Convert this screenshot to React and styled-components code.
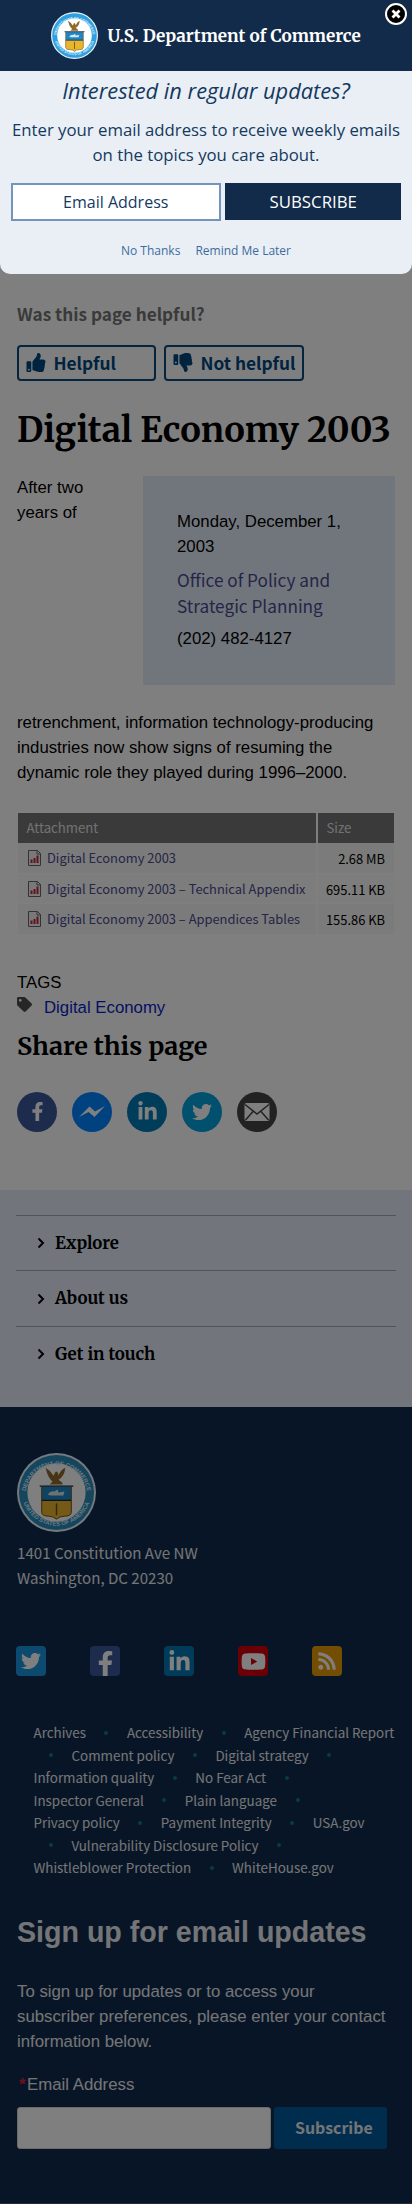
import React from "react";
import styled, { createGlobalStyle } from "styled-components";
import {
  FaThumbsUp,
  FaThumbsDown,
  FaTag,
  FaFacebookF,
  FaLinkedinIn,
  FaTwitter,
  FaYoutube,
  FaRss,
} from "react-icons/fa";

const sans = '"Liberation Sans", Arial, sans-serif';
const source = '"Source Sans Pro", "Noto Sans CJK JP", sans-serif';
const open = '"Open Sans", sans-serif';
const serif = '"Merriweather", "DejaVu Serif Condensed", "DejaVu Serif", serif';

const GlobalStyle = createGlobalStyle`
  * { box-sizing: border-box; }
  body { margin: 0; background: #fff; }
  h1, h2, h3, p, ul { margin: 0; padding: 0; }
  a { color: inherit; text-decoration: none; }
  svg { display: block; flex: none; }
`;

const Page = styled.div`
  position: relative;
  width: 412px;
  height: 2204px;
  overflow: hidden;
  font: 400 16.8px/25.2px ${sans};
  color: #000;
`;

const Dimmer = styled.div`
  position: absolute;
  inset: 0;
  background: rgba(0, 0, 0, 0.5);
`;

/* Subscription dialog */
const Dialog = styled.section`
  position: absolute;
  top: 0;
  left: 0;
  width: 412px;
  height: 274px;
  border-radius: 0 0 10px 10px;
  background: #e9eff4;
  color: #14395f;
  font-family: ${open};
  text-align: center;
`;

const DialogHeader = styled.header`
  display: flex;
  align-items: center;
  height: 71px;
  padding-left: 51px;
  gap: 9.5px;
  background: #122b4a;
  color: #fff;
`;

const Brand = styled.span`
  font: 700 17.1px/26px ${serif};
  white-space: nowrap;
`;

const CloseButton = styled.button`
  position: absolute;
  top: 3px;
  right: 5px;
  width: 22px;
  height: 22px;
  padding: 0;
  border: 2px solid #fff;
  border-radius: 50%;
  background: #000;
  display: grid;
  place-items: center;
`;

const DialogTitle = styled.h2`
  margin-top: 5px;
  font: italic 400 21.8px/30px ${open};
`;

const DialogText = styled.p`
  margin-top: 11.2px;
  font-size: 16.75px;
  line-height: 25.2px;
`;

const DialogForm = styled.div`
  display: flex;
  gap: 4px;
  margin: 15.4px 11px 0;
`;

const DialogField = styled.div`
  width: 211px;
  height: 38.5px;
  border: 2px solid #7395bd;
  background: #fff;
  font-size: 16px;
  line-height: 35px;
  padding-right: 1px;
`;

const DialogSubmit = styled.div`
  width: 176px;
  height: 37px;
  background: #122b4a;
  color: #fff;
  font-size: 16.8px;
  line-height: 37px;
`;

const DialogLinks = styled.div`
  display: flex;
  justify-content: center;
  gap: 15px;
  margin-top: 22px;
  font-size: 12px;
  line-height: 16px;
  color: #3c6c9e;
`;

/* Article */
const Main = styled.main`
  height: 1190px;
  padding: 300.7px 17px 0;
`;

const FeedbackTitle = styled.h3`
  font: 700 17.2px/25px ${source};
  color: #757575;
`;

const FeedbackRow = styled.div`
  display: flex;
  gap: 8px;
  margin-top: 19.3px;
`;

const FeedbackButton = styled.div`
  display: flex;
  align-items: center;
  gap: 8px;
  width: ${(p) => p.$width}px;
  height: 36px;
  padding-left: 6.5px;
  border: 2px solid #0b4a7f;
  border-radius: 4px;
  color: #00477f;
  font: 700 17.3px/32px ${source};
  white-space: nowrap;
  svg { width: 20px; height: 19px; flex: none; }
`;

const Title = styled.h1`
  margin-top: 27px;
  font: 700 34.4px/44px ${serif};
  white-space: nowrap;
`;

const Body = styled.p`
  margin-top: 22.6px;
`;

const Card = styled.span`
  float: right;
  display: flex;
  flex-direction: column;
  gap: 8.4px;
  width: 252px;
  height: 209px;
  margin: 1.4px 0 25px 30px;
  padding: 32.6px 34px 0;
  background: #e3ecf8;
`;

const OfficeLink = styled.a`
  font: 400 17.2px/25.2px ${source};
  color: #4c4a90;
`;

const Table = styled.div`
  display: grid;
  grid-template-columns: 298px 76px;
  column-gap: 2px;
  margin: 27.9px 0 0 1px;
  font: 400 12.9px/31.8px ${source};
`;

const HeadCell = styled.div`
  height: 29.5px;
  padding-left: 8.5px;
  background: #747474;
  color: #e4e4e4;
  line-height: 29.5px;
  font-size: 13.2px;
`;

const FileCell = styled.div`
  display: flex;
  align-items: center;
  gap: 6px;
  height: 30.7px;
  padding-left: 10px;
  border-bottom: 1px solid #fff;
  background: ${(p) => (p.$alt ? "#fafafa" : "#f7f7f7")};
  color: #4c4a90;
  white-space: nowrap;
`;

const SizeCell = styled.div`
  height: 30.7px;
  padding-right: 9px;
  border-bottom: 1px solid #fff;
  background: ${(p) => (p.$alt ? "#fafafa" : "#f7f7f7")};
  text-align: right;
  white-space: nowrap;
`;

const Tags = styled.div`
  margin-top: 34.6px;
`;

const TagLine = styled.div`
  display: flex;
  color: #0b1ec4;
  gap: 12px;
  svg { width: 15px; height: 15px; margin-top: 2px; color: #4d4d4d; }
`;

const ShareTitle = styled.h2`
  margin-top: 10px;
  font: 700 25.2px/32px ${serif};
`;

const ShareRow = styled.div`
  display: flex;
  gap: 15px;
  margin-top: 29.5px;
`;

const ShareButton = styled.a`
  display: grid;
  place-items: center;
  width: 40px;
  height: 40px;
  border-radius: 50%;
  background: ${(p) => p.$color};
  color: #fff;
`;

/* Secondary navigation */
const NavSection = styled.nav`
  height: 217px;
  padding: 24.5px 16px 0;
  background: #e5edf9;
`;

const NavItem = styled.a`
  display: flex;
  align-items: center;
  gap: 10.5px;
  height: 55.6px;
  padding: 1px 0 0 20.5px;
  border-top: 1px solid #a2a8b2;
  font: 700 16.8px/25px ${serif};
`;

/* Footer */
const Footer = styled.footer`
  height: 797px;
  padding: 46px 17px 0;
  border-bottom: 1px solid #46527a;
  background: #112a4c;
  color: #e9ebef;
`;

const Address = styled.p`
  margin-top: 8px;
  font: 400 15.1px/25px ${source};
`;

const SocialRow = styled.div`
  display: flex;
  gap: 44px;
  margin: 56px 0 0 -1px;
`;

const SocialTile = styled.a`
  display: grid;
  place-items: ${(p) => p.$place || "center"};
  width: 30px;
  height: 30px;
  border-radius: 4px;
  background: ${(p) => p.$color};
  color: #fff;
  overflow: hidden;
`;

const LinkList = styled.div`
  margin: 45px 0 0 16.5px;
  font: 400 13.4px/22.5px ${source};
`;

const LinkRow = styled.div`
  display: flex;
  height: 22.5px;
  white-space: nowrap;
`;

const Dot = styled.span`
  width: ${(p) => (p.$lead ? 38 : 41)}px;
  padding: 9.5px 0 0 ${(p) => (p.$lead ? 15.5 : 18.5)}px;
  &::before {
    content: "";
    display: block;
    width: 4px;
    height: 4px;
    border-radius: 50%;
    background: #0d7d80;
  }
`;

const SignupTitle = styled.h2`
  margin-top: 35.4px;
  font: 700 28.6px/36px ${sans};
  white-space: nowrap;
`;

const SignupText = styled.p`
  margin-top: 28.8px;
`;

const FieldLabel = styled.div`
  margin-top: 17.4px;
  padding-left: 2px;
  color: #e9ebef;
`;

const Required = styled.span`
  color: #e31c3d;
  font-weight: 700;
  margin-right: 1.5px;
`;

const SignupForm = styled.div`
  display: flex;
  gap: 3.5px;
  margin-top: 10px;
`;

const SignupField = styled.div`
  width: 253.5px;
  height: 42px;
  border: 1px solid #d5d5d5;
  border-radius: 3px;
  background: #fff;
`;

const SignupButton = styled.div`
  width: 113px;
  height: 42px;
  padding-left: 21px;
  border-radius: 3px;
  background: #005a9c;
  font: 700 15.9px/41px ${source};
`;

function Seal({ size, dim }) {
  const ring = dim ? "#2a8cbc" : "#2f9fe0";
  return (
    <svg width={size} height={size} viewBox="0 0 80 80">
      <defs>
        <path id={`top${size}`} d="M8.5 44A31.5 31.5 0 1 1 71.5 44" />
        <path id={`low${size}`} d="M5 44A35.5 35.5 0 0 0 75 44" />
      </defs>
      <circle cx="40" cy="40" r="40" fill="#e9f4fa" />
      <circle cx="40" cy="40" r="38" fill={ring} />
      <circle cx="40" cy="40" r="29.5" fill="#fff" />
      <g fill="#d6effb" fontFamily="Liberation Sans" fontWeight="700" fontSize="6">
        <text><textPath href={`#top${size}`} startOffset="50%" textAnchor="middle">DEPARTMENT OF COMMERCE</textPath></text>
        <text><textPath href={`#low${size}`} startOffset="50%" textAnchor="middle">UNITED STATES OF AMERICA</textPath></text>
      </g>
      <path d="M29 15q5 3 8 8l2-4q2-1 3 3l0 1q2-6 7-8-1 9-7 12l4 3v2H33l3-3q-5-4-7-14z" fill="#8f6a2a" />
      <path d="M25 48H55V60q0 4-7 4-5 0-8 3-3-3-8-3-7 0-7-4z" fill="#e9b52c" />
      <path d="M25 34h30v14H25z" fill="#2187c4" />
      <path d="M31 42q3-4 7-3l3-2 1 3 6-1-1 4H34z" fill="#d9e7ef" />
      <path d="M23 33.500H57M25 48H55" stroke="#13283a" strokeWidth="1.400" />
      <path d="M25 34V60q0 4 7 4 5 0 8 3 3-3 8-3 7 0 7-4V34" fill="none" stroke="#6d5217" />
      <path d="M40 51v12" stroke="#6d5217" strokeWidth="1.500" />
    </svg>
  );
}

const CloseIcon = () => (
  <svg width="12" height="12" viewBox="0 0 12 12">
    <path d="M2.500 2.500l7 7M9.500 2.500l-7 7" stroke="#fff" strokeWidth="2.800" />
  </svg>
);

const Chevron = () => (
  <svg width="8" height="12" viewBox="0 0 8 12">
    <path d="M1.500 1.500L6 6 1.500 10.500" fill="none" stroke="#000" strokeWidth="2" />
  </svg>
);

const PdfIcon = () => (
  <svg width="13" height="16" viewBox="0 0 13 16">
    <path d="M.5.5H9.500L12.500 3.500V15.500H.5z" fill="#f3f3f3" stroke="#666" />
    <path d="M9 .5V4h3.500" fill="none" stroke="#666" />
    <path d="M2.500 9.500h2V13h-2zM5.500 8h2v5h-2zM8.500 5.500h2V13h-2z" fill="#c0283c" />
  </svg>
);

const Bolt = () => (
  <svg width="26" height="14" viewBox="0 0 26 14">
    <path d="M0 12L10.500 1.500l5.500 5L26 1 15.500 12l-6-5z" fill="#fff" />
  </svg>
);

const Mail = () => (
  <svg width="26" height="20" viewBox="0 0 26 20">
    <rect x=".5" y="1" width="25" height="18" rx="2" fill="#fff" />
    <path d="M1 2.500L13 12 25 2.500M1.500 18L9 9.500M24.500 18L17 9.500" fill="none" stroke="#444" strokeWidth="1.500" />
  </svg>
);

const attachments = [
  ["Digital Economy 2003", "2.68 MB"],
  ["Digital Economy 2003 – Technical Appendix", "695.11 KB"],
  ["Digital Economy 2003 – Appendices Tables", "155.86 KB"],
];

const linkRows = [
  ["Archives", "•", "Accessibility", "•", "Agency Financial Report"],
  ["•", "Comment policy", "•", "Digital strategy", "•"],
  ["Information quality", "•", "No Fear Act", "•"],
  ["Inspector General", "•", "Plain language", "•"],
  ["Privacy policy", "•", "Payment Integrity", "•", "USA.gov"],
  ["•", "Vulnerability Disclosure Policy", "•"],
  ["Whistleblower Protection", "•", "WhiteHouse.gov"],
];

export default function App() {
  return (
    <Page>
      <GlobalStyle />
      <Main>
        <FeedbackTitle>Was this page helpful?</FeedbackTitle>
        <FeedbackRow>
          <FeedbackButton $width={139}><FaThumbsUp />Helpful</FeedbackButton>
          <FeedbackButton $width={140}><FaThumbsDown />Not helpful</FeedbackButton>
        </FeedbackRow>
        <Title>Digital Economy 2003</Title>
        <Body>
          <Card>
            <span>Monday, December 1, 2003</span>
            <OfficeLink href="#">Office of Policy and Strategic Planning</OfficeLink>
            <span>(202) 482-4127</span>
          </Card>
          After two years of retrenchment, information technology-producing
          industries now show signs of resuming the dynamic role they played
          during 1996–2000.
        </Body>
        <Table>
          <HeadCell>Attachment</HeadCell>
          <HeadCell>Size</HeadCell>
          {attachments.map(([name, size], i) => (
            <React.Fragment key={name}>
              <FileCell $alt={i === 1}><PdfIcon />{name}</FileCell>
              <SizeCell $alt={i === 1}>{size}</SizeCell>
            </React.Fragment>
          ))}
        </Table>
        <Tags>
          TAGS
          <TagLine><FaTag /><a href="#">Digital Economy</a></TagLine>
        </Tags>
        <ShareTitle>Share this page</ShareTitle>
        <ShareRow>
          <ShareButton $color="#3b5998"><FaFacebookF size={19} /></ShareButton>
          <ShareButton $color="#0084ff"><Bolt /></ShareButton>
          <ShareButton $color="#007bb5"><FaLinkedinIn size={21} /></ShareButton>
          <ShareButton $color="#00a0dc"><FaTwitter size={20} /></ShareButton>
          <ShareButton $color="#444444"><Mail /></ShareButton>
        </ShareRow>
      </Main>
      <NavSection>
        {["Explore", "About us", "Get in touch"].map((label) => (
          <NavItem key={label} href="#"><Chevron />{label}</NavItem>
        ))}
      </NavSection>
      <Footer>
        <Seal size={79} dim />
        <Address>1401 Constitution Ave NW<br />Washington, DC 20230</Address>
        <SocialRow>
          <SocialTile $color="#1b95e0"><FaTwitter size={20} /></SocialTile>
          <SocialTile $color="#3b5998" $place="end center"><FaFacebookF size={25} /></SocialTile>
          <SocialTile $color="#0077b5"><FaLinkedinIn size={23} /></SocialTile>
          <SocialTile $color="#d4000d"><FaYoutube size={25} /></SocialTile>
          <SocialTile $color="#e79c05"><FaRss size={20} /></SocialTile>
        </SocialRow>
        <LinkList>
          {linkRows.map((row, r) => (
            <LinkRow key={r}>
              {row.map((item, i) =>
                item === "•" ? <Dot key={i} $lead={i === 0} /> : <a key={i} href="#">{item}</a>
              )}
            </LinkRow>
          ))}
        </LinkList>
        <SignupTitle>Sign up for email updates</SignupTitle>
        <SignupText>
          To sign up for updates or to access your subscriber preferences,
          please enter your contact information below.
        </SignupText>
        <FieldLabel><Required>*</Required>Email Address</FieldLabel>
        <SignupForm>
          <SignupField />
          <SignupButton>Subscribe</SignupButton>
        </SignupForm>
      </Footer>
      <Dimmer />
      <Dialog>
        <DialogHeader>
          <Seal size={47} />
          <Brand>U.S. Department of Commerce</Brand>
        </DialogHeader>
        <CloseButton aria-label="Close"><CloseIcon /></CloseButton>
        <DialogTitle>Interested in regular updates?</DialogTitle>
        <DialogText>
          Enter your email address to receive weekly emails<br />on the topics you care about.
        </DialogText>
        <DialogForm>
          <DialogField>Email Address</DialogField>
          <DialogSubmit>SUBSCRIBE</DialogSubmit>
        </DialogForm>
        <DialogLinks><a href="#">No Thanks</a><a href="#">Remind Me Later</a></DialogLinks>
      </Dialog>
    </Page>
  );
}
